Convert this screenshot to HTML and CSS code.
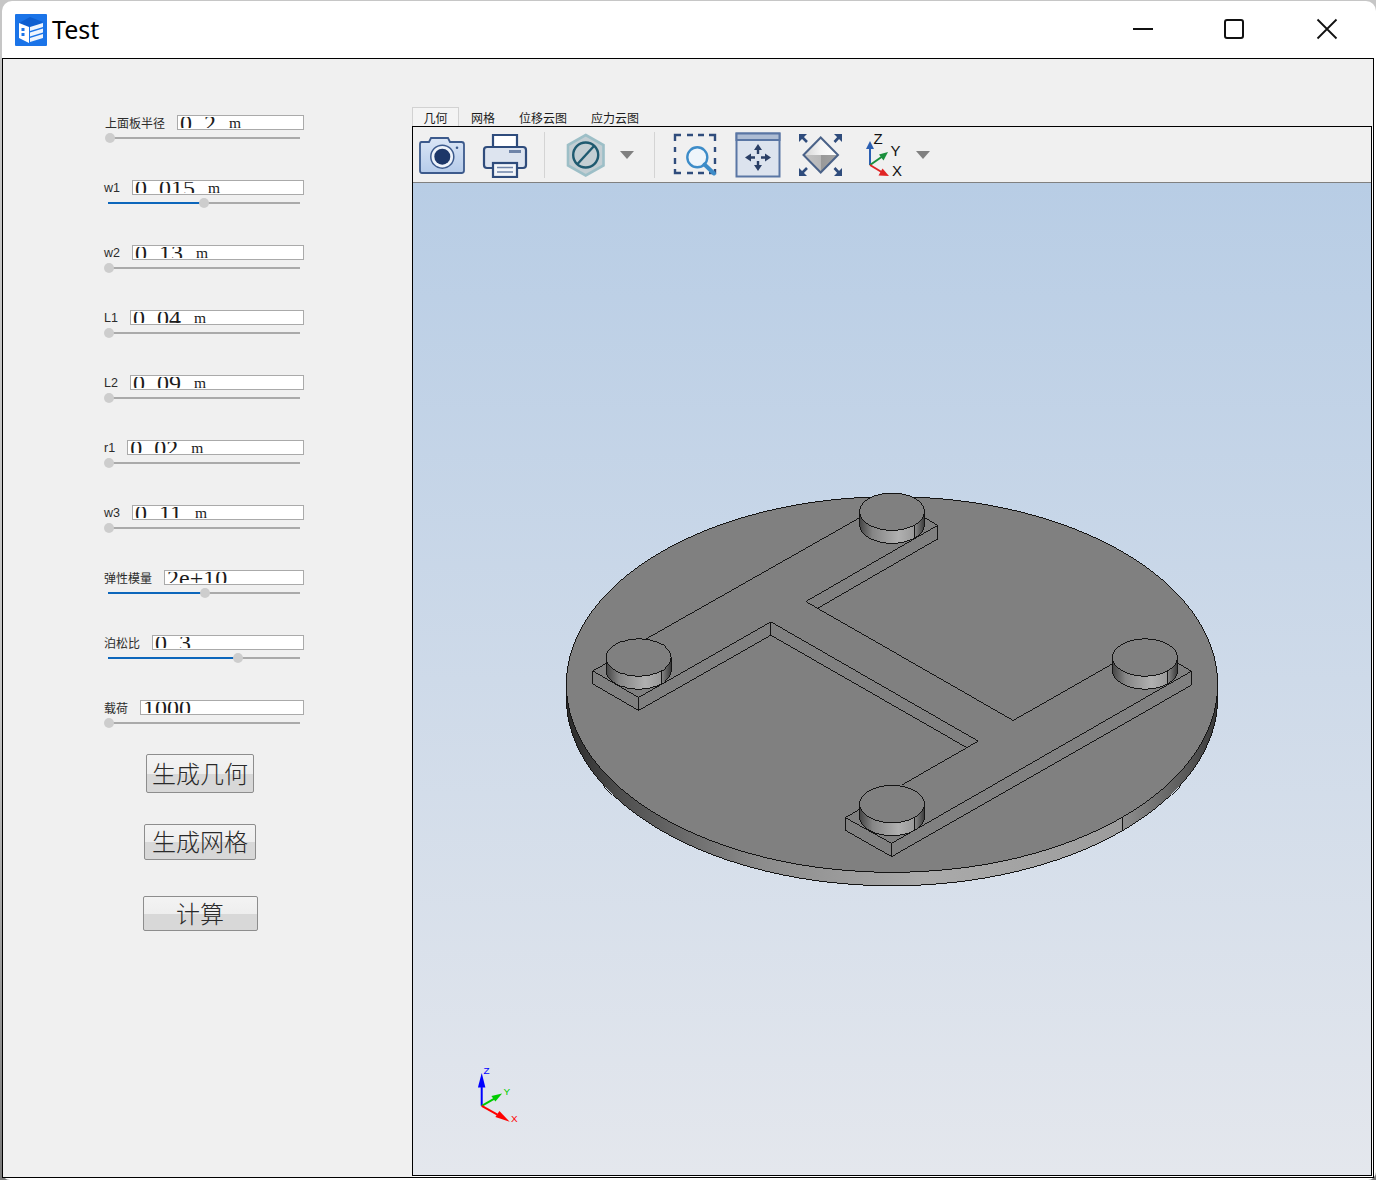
FILE: index.html
```html
<!DOCTYPE html>
<html lang="zh">
<head>
<meta charset="utf-8">
<title>Test</title>
<link rel="stylesheet" href="styles.css">
</head>
<body>
<div class="window">
  <header class="titlebar">
    <svg class="app-icon" viewBox="0 0 32 32" aria-hidden="true">
      <rect width="32" height="32" rx="1" fill="#1b74e8"/>
      <path d="M4 9 15 3 28 8 17 14Z" fill="#0f5fd0"/>
      <path d="M4 9 14 13V29L4 24Z" fill="#fff"/>
      <rect x="6.500" y="14" width="3" height="3" fill="#1b74e8"/>
      <rect x="6.500" y="19" width="3" height="3" fill="#1b74e8"/>
      <path d="M15 13 28 9V13L15 17ZM15 18.500 28 14.500V18.500L15 22.500ZM15 24 28 20V24L15 28Z" fill="#eef4fd"/>
    </svg>
    <span class="app-title">Test</span>
    <div class="win-controls">
      <svg class="win-btn" viewBox="0 0 22 22" aria-hidden="true"><path d="M1 11H21" stroke="#111" stroke-width="2"/></svg>
      <svg class="win-btn" viewBox="0 0 22 22" aria-hidden="true"><rect x="2" y="2" width="18" height="18" rx="2" fill="none" stroke="#111" stroke-width="2"/></svg>
      <svg class="win-btn win-close" viewBox="0 0 22 22" aria-hidden="true"><path d="M1.500 1.500 20.500 20.500M20.500 1.500 1.500 20.500" stroke="#111" stroke-width="1.800" fill="none"/></svg>
    </div>
  </header>

  <main class="client">
    <section class="params">
      <div class="field">
        <div class="field-row"><label class="field-label label-wide">上面板半径</label><div class="value"><div class="value-text">0<span class="dot">.</span>2 <span class="unit">m</span></div></div></div>
        <div class="slider"><i class="thumb" style="left:2px"></i></div>
      </div>
      <div class="field">
        <div class="field-row"><label class="field-label latin">w1</label><div class="value"><div class="value-text">0<span class="dot">.</span>015 <span class="unit">m</span></div></div></div>
        <div class="slider"><b class="fill" style="width:96px"></b><i class="thumb" style="left:96px"></i></div>
      </div>
      <div class="field">
        <div class="field-row"><label class="field-label latin">w2</label><div class="value"><div class="value-text">0<span class="dot">.</span>13 <span class="unit">m</span></div></div></div>
        <div class="slider"><i class="thumb" style="left:1px"></i></div>
      </div>
      <div class="field">
        <div class="field-row"><label class="field-label latin">L1</label><div class="value"><div class="value-text">0<span class="dot">.</span>04 <span class="unit">m</span></div></div></div>
        <div class="slider"><i class="thumb" style="left:1px"></i></div>
      </div>
      <div class="field">
        <div class="field-row"><label class="field-label latin">L2</label><div class="value"><div class="value-text">0<span class="dot">.</span>09 <span class="unit">m</span></div></div></div>
        <div class="slider"><i class="thumb" style="left:1px"></i></div>
      </div>
      <div class="field">
        <div class="field-row"><label class="field-label latin">r1</label><div class="value"><div class="value-text">0<span class="dot">.</span>02 <span class="unit">m</span></div></div></div>
        <div class="slider"><i class="thumb" style="left:1px"></i></div>
      </div>
      <div class="field">
        <div class="field-row"><label class="field-label latin">w3</label><div class="value"><div class="value-text">0<span class="dot">.</span>11 <span class="unit">m</span></div></div></div>
        <div class="slider"><i class="thumb" style="left:1px"></i></div>
      </div>
      <div class="field">
        <div class="field-row"><label class="field-label">弹性模量</label><div class="value"><div class="value-text">2e+10</div></div></div>
        <div class="slider"><b class="fill" style="width:97px"></b><i class="thumb" style="left:97px"></i></div>
      </div>
      <div class="field">
        <div class="field-row"><label class="field-label">泊松比</label><div class="value"><div class="value-text">0<span class="dot">.</span>3</div></div></div>
        <div class="slider"><b class="fill" style="width:130px"></b><i class="thumb" style="left:130px"></i></div>
      </div>
      <div class="field">
        <div class="field-row"><label class="field-label">载荷</label><div class="value"><div class="value-text">1000</div></div></div>
        <div class="slider"><i class="thumb" style="left:1px"></i></div>
      </div>
      <div class="actions">
        <button class="btn btn-geom">生成几何</button>
        <button class="btn btn-mesh">生成网格</button>
        <button class="btn btn-calc">计算</button>
      </div>
    </section>

    <section class="workspace">
      <nav class="tabs">
        <span class="tab tab-active">几何</span>
        <span class="tab">网格</span>
        <span class="tab">位移云图</span>
        <span class="tab">应力云图</span>
      </nav>
      <div class="pane">
        <div class="toolbar">
          <svg class="tool tool-camera" viewBox="0 0 46 46" aria-hidden="true">
            <defs><linearGradient id="camBody" x1="0" y1="0" x2="0" y2="1"><stop offset="0" stop-color="#dbe6f6"/><stop offset="1" stop-color="#b5cbea"/></linearGradient></defs>
            <path d="M2.500 10H10L12 6H29L31 10H42.500Q45 10 45 12.500V38.500Q45 41 42.500 41H3Q1 41 1 38.500V12.500Q1 10 2.500 10Z" fill="url(#camBody)" stroke="#3c5a8c" stroke-width="1.800"/>
            <circle cx="23.300" cy="24.700" r="11.500" fill="#eef3fa" stroke="#3c5a8c" stroke-width="1.500"/>
            <circle cx="23.300" cy="24.700" r="8" fill="#1d3768"/>
            <circle cx="38" cy="15.700" r="1.300" fill="#3c5a8c"/>
          </svg>
          <svg class="tool tool-printer" viewBox="0 0 46 46" aria-hidden="true">
            <path d="M11 15V3H35V15" fill="#fff" stroke="#2f4c7c" stroke-width="2.200"/>
            <path d="M5 15H41Q44 15 44 18V33Q44 36 41 36H5Q2 36 2 33V18Q2 15 5 15Z" fill="#dde4ef" stroke="#2f4c7c" stroke-width="2.200"/>
            <rect x="27" y="18" width="12" height="3" fill="#6f84a8"/>
            <rect x="11" y="31" width="24" height="14" fill="#f2f5f9" stroke="#2f4c7c" stroke-width="2.200"/>
            <path d="M15 35.500H31M15 40H31" stroke="#6f84a8" stroke-width="1.600"/>
          </svg>
          <span class="tool-sep"></span>
          <svg class="tool tool-hex" viewBox="0 0 46 46" aria-hidden="true">
            <path d="M22.700 3 40.500 13V33.500L22.700 43.500 5 33.500V13Z" fill="#c3ced3" stroke="#9dbfc7" stroke-width="2.600"/>
            <circle cx="22.700" cy="23" r="12.500" fill="none" stroke="#1f5a70" stroke-width="2.400"/>
            <path d="M14.500 32 31 14" stroke="#1f5a70" stroke-width="2.400"/>
          </svg>
          <svg class="caret caret-hex" viewBox="0 0 14 8" aria-hidden="true"><path d="M0 0H14L7 8Z" fill="#808080"/></svg>
          <span class="tool-sep sep-second"></span>
          <svg class="tool tool-zoom" viewBox="0 0 46 46" aria-hidden="true">
            <path d="M3 9V3H9M15 3H21M26 3H32M37 3H43V9M43 15V20M43 26V32M43 37V41H37M32 41H26M21 41H15M9 41H3V37M3 32V26M3 20V15" fill="none" stroke="#2f4c7c" stroke-width="2.400"/>
            <circle cx="25.300" cy="25.300" r="10" fill="#eef5fb" stroke="#3d8cc8" stroke-width="2.400"/>
            <path d="M32.500 32.500 42 41.500" stroke="#3d8cc8" stroke-width="4" stroke-linecap="round"/>
          </svg>
          <svg class="tool tool-pan" viewBox="0 0 46 46" aria-hidden="true">
            <rect x="1.500" y="1.500" width="43" height="43" fill="#dce3ee" stroke="#5a76a4" stroke-width="2"/>
            <rect x="1.500" y="1.500" width="43" height="6.500" fill="#aebdd4" stroke="#5a76a4" stroke-width="2"/>
            <path d="M23 15V22M23 29V36M13 25.500H20M26 25.500H33" stroke="#2a3f66" stroke-width="2.400"/>
            <path d="M23 12 27 18H19ZM23 39 19 33H27ZM10 25.500 16 21.500V29.500ZM36 25.500 30 29.500V21.500Z" fill="#2a3f66"/>
          </svg>
          <svg class="tool tool-fit" viewBox="0 0 46 46" aria-hidden="true">
            <defs><linearGradient id="fitTop" x1="0" y1="0" x2="1" y2="0"><stop offset="0" stop-color="#d4d4d4"/><stop offset=".5" stop-color="#f4f4f4"/><stop offset="1" stop-color="#fff"/></linearGradient>
            <linearGradient id="fitBottom" x1="0" y1="0" x2="1" y2="0"><stop offset="0" stop-color="#c4c4c4"/><stop offset=".5" stop-color="#b8b8b8"/><stop offset=".51" stop-color="#999"/><stop offset="1" stop-color="#a4a4a4"/></linearGradient></defs>
            <path d="M6.500 23 23.700 5.500 41 23Z" fill="url(#fitTop)"/>
            <path d="M6.500 23 23.700 40.500 41 23Z" fill="url(#fitBottom)"/>
            <path d="M6.500 23 23.700 5.500 41 23 23.700 40.500Z" fill="none" stroke="#4a6288" stroke-width="2"/>
            <path d="M10 10 4 4M37.500 10 43 4M10 36 4 42M37.500 36 43 42" stroke="#2f4c7c" stroke-width="2.600"/>
            <path d="M2 2H10L2 10ZM45 2H37L45 10ZM2 44H10L2 36ZM45 44H37L45 36Z" fill="#2f4c7c"/>
          </svg>
          <svg class="tool tool-axis" viewBox="0 0 46 46" aria-hidden="true">
            <path d="M8 33V13" stroke="#2b5fb2" stroke-width="2"/>
            <path d="M8 9 12 17H4Z" fill="#2b5fb2"/>
            <path d="M8 33 21 24" stroke="#1a8f3c" stroke-width="2"/>
            <path d="M26 20 21.500 28.500 17 22.500Z" fill="#1a8f3c"/>
            <path d="M8 33 22 41.500" stroke="#e02525" stroke-width="2"/>
            <path d="M27 44 16.500 43.500 20.500 36.500Z" fill="#e02525"/>
            <text class="axis-letter" x="11.500" y="11.500">Z</text>
            <text class="axis-letter" x="28.500" y="23.500">Y</text>
            <text class="axis-letter" x="30" y="44">X</text>
          </svg>
          <svg class="caret caret-axis" viewBox="0 0 14 8" aria-hidden="true"><path d="M0 0H14L7 8Z" fill="#808080"/></svg>
        </div>
        <div class="viewport">
          <svg class="scene" viewBox="413 183 958 992" aria-label="三维模型">
            <defs>
              <linearGradient id="discSide" gradientUnits="userSpaceOnUse" x1="566" y1="0" x2="1218" y2="0">
                <stop offset="0" stop-color="#2a2a2a"/>
                <stop offset=".08" stop-color="#4e4e4e"/>
                <stop offset=".3" stop-color="#8c8c8c"/>
                <stop offset=".55" stop-color="#aaaaaa"/>
                <stop offset=".852" stop-color="#9c9c9c"/>
                <stop offset=".854" stop-color="#8e8e8e"/>
                <stop offset=".95" stop-color="#5a5a5a"/>
                <stop offset="1" stop-color="#383838"/>
              </linearGradient>
              <linearGradient id="postSide" x1="0" y1="0" x2="1" y2="0">
                <stop offset="0" stop-color="#444"/>
                <stop offset=".2" stop-color="#858585"/>
                <stop offset=".6" stop-color="#b0b0b0"/>
                <stop offset=".84" stop-color="#9a9a9a"/>
                <stop offset=".85" stop-color="#8a8a8a"/>
                <stop offset="1" stop-color="#3a3a3a"/>
              </linearGradient>
              <g id="post">
                <path d="M-32.500 0V13A32.500 18.700 0 0 0 32.500 13V0Z" fill="url(#postSide)" stroke="#141414"/>
                <path d="M22.700 13.500V27" stroke="#141414" fill="none"/>
                <ellipse rx="32.500" ry="18.700" fill="#808080" stroke="#141414"/>
              </g>
            </defs>
            <g class="model">
              <path d="M566 685V698.500A326 188 0 0 0 1218 698.500V685Z" fill="url(#discSide)" stroke="#141414"/>
              <ellipse cx="892" cy="685" rx="326" ry="188" fill="#808080" stroke="#141414"/>
              <path d="M1122.300 818V831.500" stroke="#141414" fill="none"/>
              <path fill="none" stroke="#141414" d="M646 639.300 859.300 518.300M592.300 671.300 606 664M592.300 671.300 638.300 698 770.700 622.300M592.300 671.300V684.300L638.300 711 770.700 635.700M638.300 698V711M770.700 622.300V635.700M770.700 622.300 978.300 741.700 901.700 785.700M770.700 635.700 966 747.700M924.300 517.700 937.700 525.700V539.300L818.300 608.300M937.700 525.700 805.700 602 1013.300 721 1112.700 664.300M1177.700 663.300 1191.700 671.700V685.700L891.700 857.300V844L1191.700 671.700M891.700 844 845.300 818.300V831L891.700 857.300M845.300 818.300 859.300 810"/>
              <use href="#post" x="638.300" y="658"/>
              <use href="#post" x="892" y="512"/>
              <use href="#post" x="1145.200" y="658"/>
              <use href="#post" x="892" y="804.700"/>
            </g>
            <g class="triad">
              <path d="M481.300 1106.700V1088" stroke="#0000ff" stroke-width="2" fill="none"/>
              <path d="M481.300 1074 485 1088.500H477.500Z" fill="#0000ff"/>
              <path d="M481.300 1106.700 494 1099.500" stroke="#00cc00" stroke-width="2" fill="none"/>
              <path d="M501.700 1094.300 495 1102.500 491 1097Z" fill="#00cc00"/>
              <path d="M481.300 1106.700 497 1115.500" stroke="#ff0000" stroke-width="2" fill="none"/>
              <path d="M509.300 1122.700 495 1118 499 1112Z" fill="#ff0000"/>
              <text class="triad-z" x="483" y="1075">Z</text>
              <text class="triad-y" x="503" y="1096">Y</text>
              <text class="triad-x" x="510.500" y="1123">X</text>
            </g>
          </svg>
        </div>
      </div>
    </section>
  </main>
</div>
</body>
</html>
```

FILE: styles.css
```css
* { box-sizing: border-box; }

html, body {
  margin: 0;
  height: 100%;
}

body {
  width: 1376px;
  height: 1180px;
  overflow: hidden;
  background: linear-gradient(#c6c6c6 0, #c6c6c6 60%, #7a7a7a 100%);
  padding: 1px 0 0 2px;
  font-family: "Noto Sans CJK SC", "Liberation Sans", sans-serif;
}

.window {
  width: 1374px;
  height: 1179px;
  background: #fff;
  border-radius: 10px 10px 8px 8px;
  padding: 0 2px 0 0;
  display: flex;
  flex-direction: column;
}

.titlebar {
  height: 57px;
  display: flex;
  align-items: center;
  padding-left: 13px;
}

.app-icon {
  width: 32px;
  height: 32px;
  margin-top: 1px;
}

.app-title {
  font-family: "Noto Sans", sans-serif;
  font-size: 25px;
  color: #000;
  margin-left: 5px;
  line-height: 32px;
  margin-top: -1px;
}

.win-controls {
  margin-left: auto;
  display: flex;
  align-items: center;
  padding-right: 36px;
  gap: 69px;
  margin-top: -1px;
}

.win-btn {
  width: 22px;
  height: 22px;
}

.win-close {
  margin-left: 2px;
}

.client {
  height: 1120px;
  border: 1px solid #000;
  background: #f0f0f0;
  display: flex;
  padding: 0 1px 1px 0;
}

.params {
  width: 409px;
  padding: 56px 0 0 101px;
  display: flex;
  flex-direction: column;
}

.field {
  width: 200px;
  height: 65px;
}

.field-row {
  display: flex;
  align-items: center;
  gap: 12px;
  height: 15px;
}

.field-label {
  font-size: 12px;
  line-height: 15px;
  color: #2c2c2c;
  font-family: "Noto Sans CJK SC", "Liberation Sans", sans-serif;
}

.latin {
  font-family: "Liberation Sans", sans-serif;
  font-size: 12.500px;
  padding-top: 2px;
}

.label-wide {
  margin-left: 1px;
}

.value {
  flex: 1;
  height: 15px;
  border: 1px solid #aaa;
  background: #fff;
  padding: 1px 0 0 2px;
}

.value-text {
  height: 11px;
  overflow: hidden;
  white-space: pre;
  font-family: "Liberation Serif", serif;
  font-size: 24px;
  line-height: 12px;
  word-spacing: 7px;
  color: #1c1c1c;
}

.dot {
  letter-spacing: 6px;
}

.unit {
  font-size: 15.500px;
  line-height: 0;
  vertical-align: 3px;
}

.slider {
  position: relative;
  height: 2px;
  margin: 7px 0 0 4px;
  width: 192px;
  background: #aaa;
}

.fill {
  display: block;
  height: 2px;
  background: #0c66bb;
}

.thumb {
  position: absolute;
  top: -4px;
  width: 10px;
  height: 10px;
  margin-left: -5px;
  border-radius: 50%;
  background: #cdcdcd;
}

.actions {
  margin: -11px 0 0 -101px;
  width: 394px;
  display: flex;
  flex-direction: column;
  align-items: center;
}

.btn {
  padding: 0 0 2px;
  border: 1px solid #8d8d8d;
  border-radius: 2px;
  background: linear-gradient(#f3f3f3 0, #eeeeee 50%, #d8d8d8 51%, #d8d8d8 100%);
  font-family: "Noto Sans CJK SC", sans-serif;
  font-size: 24px;
  font-weight: 300;
  color: #2a2a2a;
  line-height: 1;
}

.btn-geom { width: 108px; height: 39px; }
.btn-mesh { width: 112px; height: 36px; margin-top: 31px; }
.btn-calc { width: 115px; height: 35px; margin-top: 36px; }

.workspace {
  flex: 1;
  padding-top: 48px;
  display: flex;
  flex-direction: column;
}

.tabs {
  display: flex;
  height: 19px;
}

.tab {
  padding: 0 12px;
  font-size: 12px;
  line-height: 21px;
  color: #1c1c1c;
  white-space: nowrap;
}

.tab-active {
  border: 1px solid #d2d2d2;
  border-bottom: 0;
  padding: 0 10.500px;
  line-height: 19px;
  background: #f4f4f4;
}

.pane {
  flex: 1;
  border: 1px solid #000;
  display: flex;
  flex-direction: column;
  box-shadow: 1px 1px 0 #fff;
}

.toolbar {
  height: 56px;
  flex: none;
  background: #f0f0f0;
  border-bottom: 1px solid #808080;
  display: flex;
  align-items: center;
  padding-left: 6px;
}

.tool {
  width: 46px;
  height: 46px;
  flex: none;
}

.tool-printer { margin-left: 17px; }
.tool-hex { margin-left: 18px; }
.tool-zoom { margin-left: 17px; }
.tool-pan { margin-left: 17px; }
.tool-fit { margin-left: 16px; }
.tool-axis { margin-left: 19px; }

.tool-sep {
  width: 1px;
  height: 46px;
  background: #d4d4d4;
  margin-left: 16px;
}

.sep-second { margin-left: 20px; }

.caret {
  width: 14px;
  height: 8px;
  flex: none;
}

.caret-hex { margin-left: 11px; }
.caret-axis { margin-left: 8px; }

.axis-letter {
  font-family: "Liberation Sans", sans-serif;
  font-size: 15px;
  fill: #111;
}

.viewport {
  flex: 1;
  background: linear-gradient(#b8cde5 0, #e4e7ed 100%);
}

.scene {
  display: block;
  width: 958px;
  height: 991px;
}

.model {
  shape-rendering: crispEdges;
}

.triad text {
  font-family: "Liberation Sans", sans-serif;
  font-size: 10px;
}

.triad-z { fill: #0000ff; }
.triad-y { fill: #00cc00; }
.triad-x { fill: #ff0000; }
```
